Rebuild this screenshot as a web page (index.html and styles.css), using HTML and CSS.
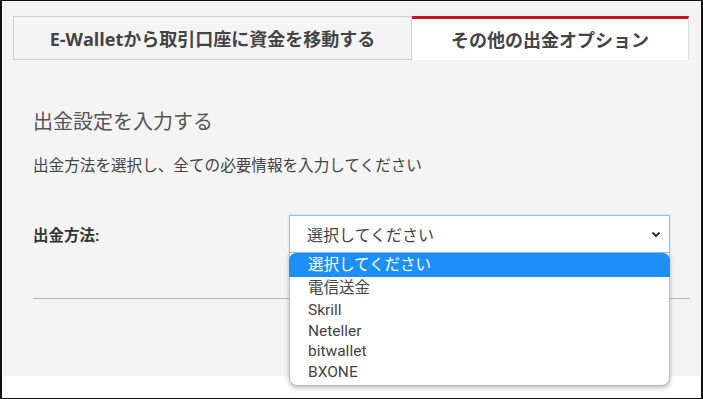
FILE: index.html
```html
<!DOCTYPE html>
<html lang="ja">
<head>
  <meta charset="UTF-8">
  <meta name="viewport" content="width=device-width, initial-scale=1.0">
  <title>出金</title>
  <link rel="stylesheet" href="styles.css">
</head>
<body>
  <div class="frame">
    <div class="page">
      <div class="tabs">
        <div class="tab">E-Walletから取引口座に資金を移動する</div>
        <div class="tab active">その他の出金オプション</div>
      </div>

      <div class="panel">
        <h2>出金設定を入力する</h2>
        <p class="lead">出金方法を選択し、全ての必要情報を入力してください</p>

        <div class="field">
          <label>出金方法:</label>
          <div class="select-wrap">
            <div class="select">
              <span>選択してください</span>
              <svg class="chevron" width="10" height="7" viewBox="0 0 10 7">
                <polyline points="1.5,1.5 5,5 8.5,1.5" fill="none" stroke="#333" stroke-width="2"/>
              </svg>
            </div>
            <!-- open dropdown -->
            <ul class="options">
              <li class="opt jp selected">選択してください</li>
              <li class="opt jp">電信送金</li>
              <li class="opt">Skrill</li>
              <li class="opt">Neteller</li>
              <li class="opt">bitwallet</li>
              <li class="opt">BXONE</li>
            </ul>
          </div>
        </div>

        <hr class="divider">
      </div>
    </div>
  </div>
</body>
</html>
```

FILE: styles.css
```css
body {
  margin: 0;
  font-family: Roboto, "Noto Sans CJK JP", sans-serif;
  color: #444;
}
.frame {
  width: 703px;
  height: 399px;
  box-sizing: border-box;
  border: 2px solid #111;
  border-top-width: 1px;
  border-bottom-width: 1px;
  background: #fff;
  padding: 1px 1px 0 1px;
}
.page {
  background: #f4f4f4;
  height: 374px;
  padding: 14px 0 0 10px;
  box-sizing: border-box;
}
.tabs {
  display: flex;
  height: 44px;
}
.tab {
  box-sizing: border-box;
  width: 399px;
  border: 1px solid #cfcfcf;
  display: flex;
  align-items: center;
  justify-content: center;
  font-family: "Open Sans", "Noto Sans CJK JP", sans-serif;
  font-weight: bold;
  font-size: 18px;
  color: #444;
}
.tab.active {
  width: 277px;
  background: #fff;
  border: none;
  border-top: 3px solid #c4161c;
  border-right: 1px solid #ddd;
  padding-bottom: 2px;
}
.panel {
  padding: 0 10px 0 20px;
}
h2 {
  margin: 48px 0 0;
  font-size: 20px;
  font-weight: normal;
  color: #555;
  line-height: 28px;
}
.lead {
  margin: 20px 0 0;
  font-size: 15.6px;
  line-height: 20px;
  color: #444;
}
.field {
  display: flex;
  align-items: center;
  margin-top: 39px;
}
label {
  width: 256px;
  font-weight: bold;
  font-size: 15.5px;
  color: #333;
}
.select-wrap {
  position: relative;
}
.select {
  box-sizing: border-box;
  width: 381px;
  height: 38px;
  background: #fff;
  border: 1px solid #8fc1ee;
  box-shadow: 0 0 2px rgba(100, 170, 240, 0.4);
  display: flex;
  align-items: center;
  justify-content: space-between;
  padding: 0 8px 0 17px;
  font-size: 16px;
  color: #444;
}
.chevron {
  margin-top: 1px;
}
.options {
  position: absolute;
  top: 38px;
  left: 0;
  width: 381px;
  margin: 0;
  padding: 0 0 3px;
  list-style: none;
  background: #fff;
  border: 1px solid #bbb;
  border-top: none;
  box-sizing: border-box;
  border-radius: 0 0 8px 8px;
  box-shadow: 0 2px 5px rgba(0, 0, 0, 0.25);
  z-index: 2;
}
.opt {
  padding: 0 18px;
  font-size: 15.5px;
  line-height: 20.5px;
  color: #444;
}
.opt.jp {
  line-height: 23px;
}
.opt.selected {
  background: #1e8ff8;
  color: #fff;
  line-height: 24px;
  border-radius: 7px 7px 0 0;
  margin: 0 -1px;
  padding-left: 19px;
}
.divider {
  margin: 45px 0 0;
  border: none;
  border-top: 1px solid #b5b5b5;
}
```
